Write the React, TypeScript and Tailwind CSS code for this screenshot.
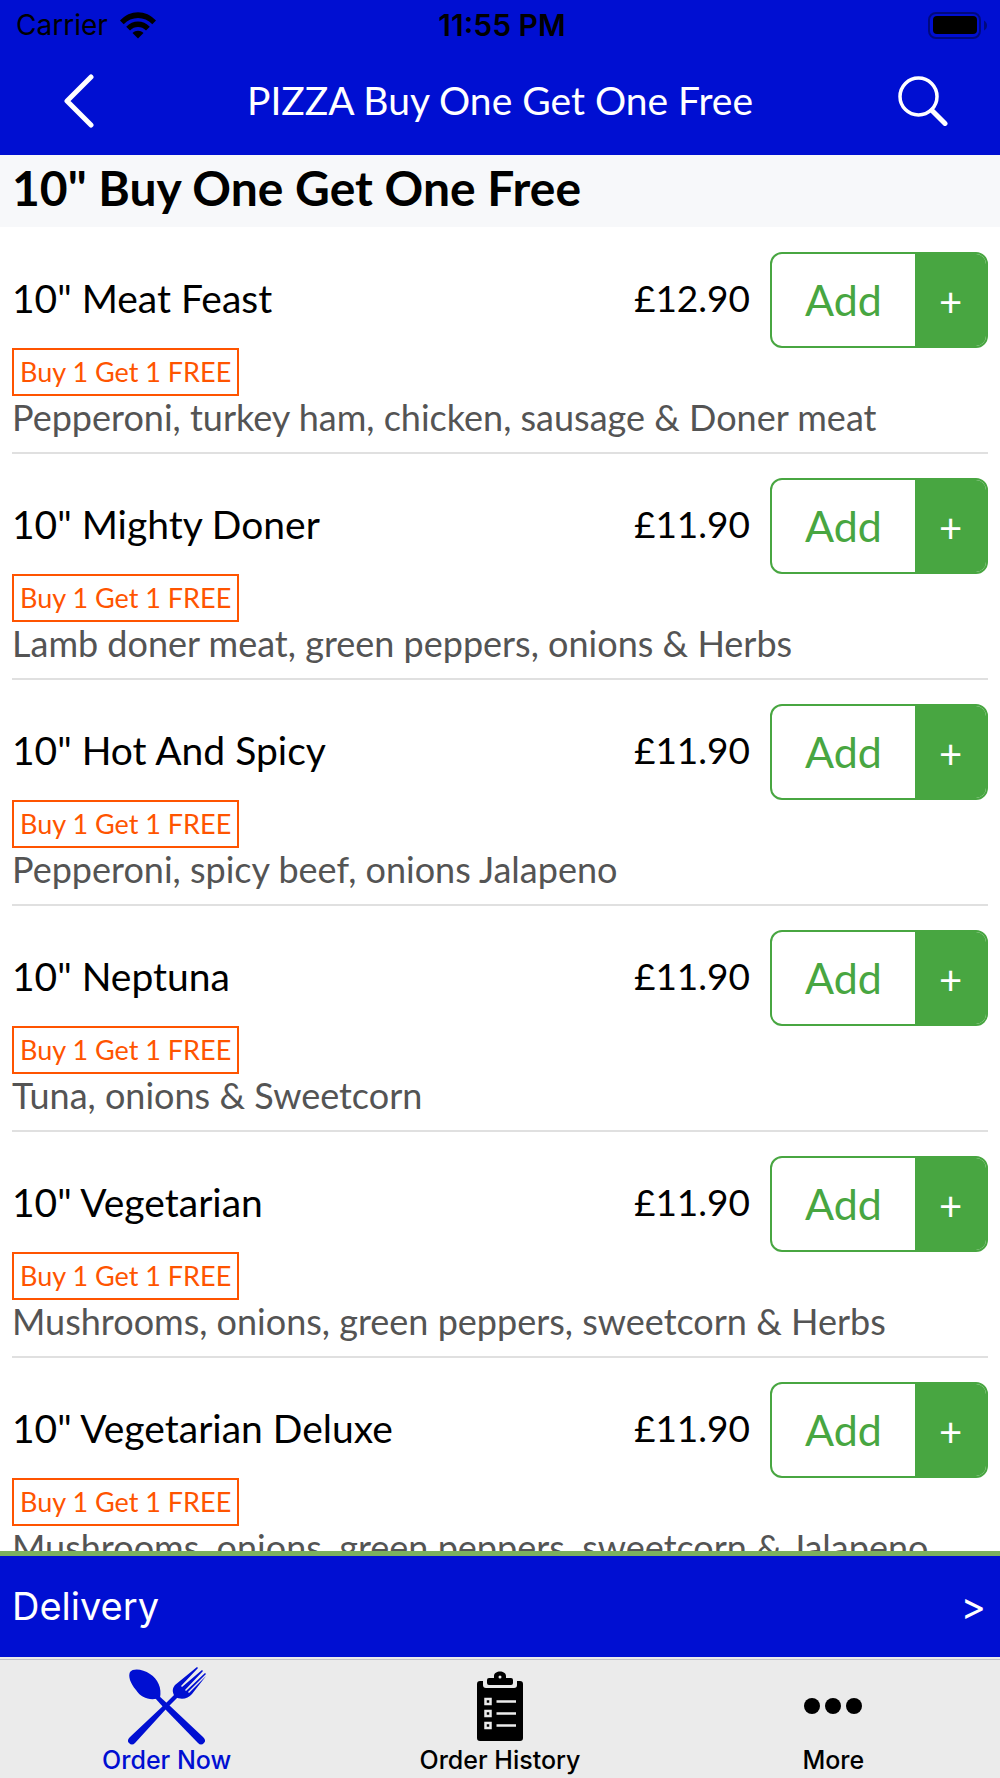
type MenuItem = {
  name: string;
  price: string;
  description: string;
};

const ITEMS: MenuItem[] = [
  { name: '10" Meat Feast', price: '£12.90', description: 'Pepperoni, turkey ham, chicken, sausage & Doner meat' },
  { name: '10" Mighty Doner', price: '£11.90', description: 'Lamb doner meat, green peppers, onions & Herbs' },
  { name: '10" Hot And Spicy', price: '£11.90', description: 'Pepperoni, spicy beef, onions Jalapeno' },
  { name: '10" Neptuna', price: '£11.90', description: 'Tuna, onions & Sweetcorn' },
  { name: '10" Vegetarian', price: '£11.90', description: 'Mushrooms, onions, green peppers, sweetcorn & Herbs' },
  { name: '10" Vegetarian Deluxe', price: '£11.90', description: 'Mushrooms, onions, green peppers, sweetcorn & Jalapeno' },
];

function WifiIcon() {
  return (
    <svg viewBox="0 0 36 27" className="h-[27px] w-9" aria-hidden="true">
      <path d="M0 8.6C10-2.6 26-2.6 36 8.6l-3.7 3.7C24.5 3.9 11.5 3.9 3.7 12.3z" />
      <path d="M6.2 14.7c6.6-7 17-7 23.6 0l-3.8 3.7c-4.5-4.6-11.5-4.6-16 0z" />
      <path d="M12.5 20.9c3.2-3 7.8-3 11 0L18 26.5z" />
    </svg>
  );
}

function BatteryIcon() {
  return (
    <svg viewBox="0 0 60 27" className="h-[27px] w-15" aria-hidden="true">
      <rect x="1" y="1" width="51" height="25" rx="7" fill="none" stroke="#000" strokeWidth="2" opacity="0.4" />
      <rect x="5" y="4" width="44" height="18" rx="4" />
      <path d="M56 8.5c4 2 4 8 0 10z" opacity="0.4" />
    </svg>
  );
}

function SpoonForkIcon() {
  return (
    <svg viewBox="0 0 78 78" className="h-[78px] w-[78px]" fill="currentColor" aria-hidden="true">
      <path d="M2 5c3-4 13-3 20 2 8 5 12 14 10 24-10 3-19 0-24-8C2 16 0 9 2 5z" />
      <path d="M27 31l3-3 11 10 34 32c2 2 3 4 1 6s-4 2-6 0L36 41z" />
      <path d="M51 29l-3-3-11 11L2 70c-2 2-3 4-1 6s4 2 6 0l32-35z" />
      <path d="M47 30c-3-5-3-8 0-12L69 0l1 1-17 18 1 1L74 3l1 1-18 19 1 1L77 6l1 1-18 18 1 1L78 9 64 27c-4 5-11 6-17 3z" />
    </svg>
  );
}

function ClipboardIcon() {
  return (
    <svg viewBox="0 0 46 71" className="h-[71px] w-[46px]" fill="currentColor" aria-hidden="true">
      <path d="M3 10h3v4q0 3 3 3h28q3 0 3-3v-4h3q3 0 3 3v54q0 3-3 3H3q-3 0-3-3V13q0-3 3-3z" />
      <path fillRule="evenodd" d="M10 9q0-2 2-2h5V5c0-6 12-6 12 0v2h5q2 0 2 2v3q0 2-2 2H12q-2 0-2-2zM21.5 6a1.5 1.5 0 1 0 3 0 1.5 1.5 0 1 0-3 0z" />
      <g fill="none" stroke="#ebebeb" strokeWidth="2.5">
        <path d="M8.5 28h5v5h-5zM8.5 40h5v5h-5zM8.5 52h5v5h-5z" />
        <path d="M19.5 30.5H39M19.5 42.5H39M19.5 54.5H39" />
      </g>
    </svg>
  );
}

function DotsIcon() {
  return (
    <svg viewBox="0 0 58 16" className="h-4 w-[58px]" fill="currentColor" aria-hidden="true">
      <circle cx="8" cy="8" r="8" />
      <circle cx="29" cy="8" r="8" />
      <circle cx="50" cy="8" r="8" />
    </svg>
  );
}

function Header() {
  return (
    <header className="shrink-0 bg-[#000fd2]">
      <div className="grid h-[50px] grid-cols-3 items-center pl-4 pr-3 font-['Inter',sans-serif] text-[28px] text-black">
        <div className="flex items-center gap-3">
          <span>Carrier</span>
          <WifiIcon />
        </div>
        <span className="text-center text-[30px] font-semibold">11:55 PM</span>
        <div className="flex justify-end">
          <BatteryIcon />
        </div>
      </div>
      <div className="flex h-[105px] items-center justify-between px-12 pb-1 text-white">
        <button type="button" aria-label="Back" className="flex h-14 w-14 items-center justify-end pr-2">
          <svg viewBox="0 0 32 54" className="h-[54px] w-8" fill="none" stroke="currentColor" strokeWidth="5" strokeLinecap="round" strokeLinejoin="round">
            <path d="M27 3L3 27l24 24" />
          </svg>
        </button>
        <h1 className="text-[39px]">PIZZA Buy One Get One Free</h1>
        <button type="button" aria-label="Search" className="flex h-14 w-14 items-center justify-end pr-1">
          <svg viewBox="0 0 50 50" className="h-[50px] w-[50px]" fill="none" stroke="currentColor" strokeLinecap="round">
            <circle cx="20.5" cy="20.5" r="18.5" strokeWidth="3.5" />
            <path d="M34 34.5l13 13" strokeWidth="5" />
          </svg>
        </button>
      </div>
    </header>
  );
}

function MenuRow({ item }: { item: MenuItem }) {
  return (
    <li className="mx-3 flex h-[226px] flex-col items-start border-b-2 border-[#e0e0e0] pt-6">
      <div className="flex w-full items-center">
        <h3 className="flex-1 pb-1 text-[39px] text-black">{item.name}</h3>
        <span className="mr-5 pb-1 text-[37px] text-black">{item.price}</span>
        <button
          type="button"
          aria-label={`Add ${item.name}`}
          className="flex h-24 w-[218px] overflow-hidden rounded-xl border-2 border-[#48a641] bg-white"
        >
          <span className="flex h-full flex-1 items-center justify-center text-[43px] text-[#48a641]">Add</span>
          <span className="flex h-full w-[71px] items-center justify-center bg-[#48a641] pt-1 text-[40px] text-white">+</span>
        </button>
      </div>
      <span className="flex h-12 items-center border-2 border-[#ff5400] px-1.5 text-[27px] text-[#ff5400]">
        Buy 1 Get 1 FREE
      </span>
      <p className="whitespace-nowrap text-[36px] leading-[42px] text-[#545454]">{item.description}</p>
    </li>
  );
}

function TabBar() {
  return (
    <nav className="grid h-[119px] shrink-0 grid-cols-3 border-t border-[#c0c0c8] bg-[#ebebeb] font-['Inter',sans-serif] text-[25px] font-medium text-black">
      <a href="#order" aria-current="page" className="flex flex-col items-center text-[#000fd2]">
        <span className="flex h-[86px] items-center pt-1.5"><SpoonForkIcon /></span>
        <span className="leading-7">Order Now</span>
      </a>
      <a href="#history" className="flex flex-col items-center">
        <span className="flex h-[86px] items-center pt-1.5"><ClipboardIcon /></span>
        <span className="leading-7">Order History</span>
      </a>
      <a href="#more" className="flex flex-col items-center">
        <span className="flex h-[86px] items-center pt-1.5"><DotsIcon /></span>
        <span className="leading-7">More</span>
      </a>
    </nav>
  );
}

export default function App() {
  return (
    <div className="flex h-screen flex-col overflow-hidden bg-white font-['Lato',sans-serif]">
      <Header />
      <main className="min-h-0 flex-1 overflow-y-auto [scrollbar-width:none]">
        <h2 className="h-[72px] bg-[#f7f8fa] px-3 text-[48px] font-bold leading-[66px] text-black">
          10" Buy One Get One Free
        </h2>
        <ul className="pt-px">
          {ITEMS.map((item) => (
            <MenuRow key={item.name} item={item} />
          ))}
        </ul>
      </main>
      <button
        type="button"
        className="flex h-[108px] shrink-0 items-center justify-between border-t-5 border-b-2 border-t-[#7cb05f] border-b-[#ebebeb] bg-[#000fd2] pl-3 pr-3.5 font-['Inter',sans-serif] text-[38px] text-white"
      >
        <span>Delivery</span>
        <span>&gt;</span>
      </button>
      <TabBar />
    </div>
  );
}
